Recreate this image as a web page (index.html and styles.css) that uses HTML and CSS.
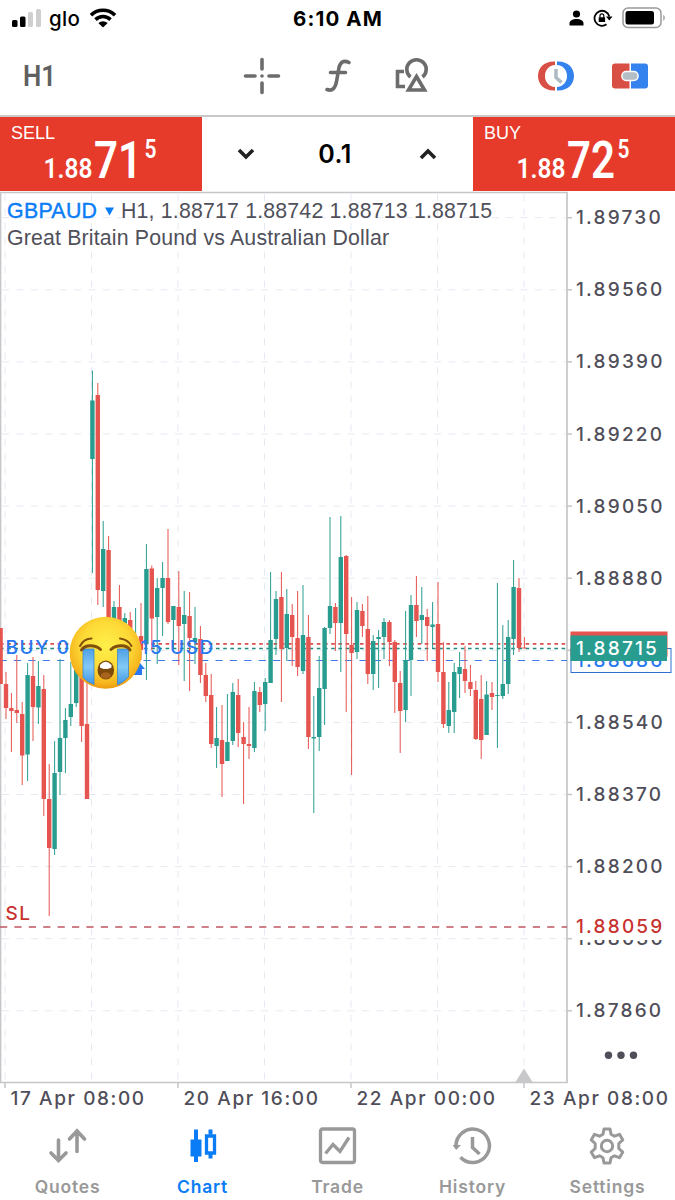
FILE: index.html
```html
<!DOCTYPE html>
<html lang="en">
<head>
    <meta charset="UTF-8">
    <title>GBPAUD H1</title>
    <meta name="viewport" content="width=device-width, initial-scale=1.0">
    <link rel="stylesheet" href="styles.css">
</head>
<body>
    <div class="status-bar">
        <div class="status-left">
            <svg class="signal" width="30" height="18" viewBox="0 0 30 18">
                <rect x="0" y="11" width="5.500" height="7" rx="1.5"/>
                <rect x="8" y="7.500" width="5.500" height="10.500" rx="1.500"/>
                <rect class="off" x="16" y="3" width="5" height="15" rx="1.5"/>
                <rect class="off" x="24" y="0" width="5" height="18" rx="1.5"/>
            </svg>
            <span class="carrier">glo</span>
            <svg class="wifi" width="28" height="20" viewBox="0 0 28 20">
                <path d="M2 7.200A17 17 0 0 1 26 7.200M6.500 11.600A10.700 10.700 0 0 1 21.500 11.600" fill="none" stroke="#000" stroke-width="3.600"/>
                <path d="M14 19.500L9.300 15Q14 11.400 18.700 15Z"/>
            </svg>
        </div>
        <div class="clock">6:10 AM</div>
        <div class="status-right">
            <svg width="15" height="16" viewBox="0 0 15 16"><circle cx="7.500" cy="4" r="3.600"/><path d="M.5 15.500V13.500C.5 10.500 3.500 9 7.500 9s7 1.500 7 4.500v2z"/></svg>
            <svg width="20" height="18" viewBox="0 0 20 18">
                <path d="M13.500 15.300A7.500 7.500 0 1 1 16.300 7.500" fill="none" stroke="#000" stroke-width="1.800"/>
                <path d="M13 7.500h6.500l-3.200 4zM5.700 8.300h6.400v4.700h-6.400z"/>
                <path d="M7 8.500V6.700a1.900 1.900 0 0 1 3.800 0v2" fill="none" stroke="#000" stroke-width="1.200"/>
            </svg>
            <svg width="44" height="22" viewBox="0 0 44 22">
                <rect x="1" y="1" width="38" height="19.500" rx="5" fill="none" stroke="#999" stroke-width="1.500"/>
                <rect x="3.500" y="4" width="28.500" height="13.500" rx="2.500"/>
                <path d="M41.300 7.500q3 3.200 0 6.500z" fill="#999"/>
            </svg>
        </div>
    </div>

    <div class="toolbar">
        <span class="timeframe">H1</span>
        <svg class="icon-cross" width="40" height="40" viewBox="0 0 40 40">
            <path d="M20 3.500V13M20 27V36.500M3.500 20H13M27 20H36.500M20 20h.01"/>
        </svg>
        <svg class="icon-func" width="40" height="40" viewBox="0 0 40 40">
            <path d="M31 6.500C25 3.500 21.800 7 20.800 12.500L18.600 25C17.500 32 14.500 35.500 9 33.500M12.500 16.500H27.500"/>
        </svg>
        <svg class="icon-shapes" width="40" height="40" viewBox="0 0 40 40">
            <path d="M12 15.500H5.500V30.500H13M18.500 21A9.700 9.700 0 1 1 30.500 21"/>
            <path d="M24.500 20.500L32.500 34H16.500Z"/>
        </svg>
        <svg class="icon-hours" width="38" height="32" viewBox="0 0 38 32">
            <path fill="#d84f45" d="M18 1.500C7 1 1 8 1 16S7 31 18 30.500V27C12 26.500 8 22 8 16s4-10.500 10-11z"/>
            <path fill="#3482ee" d="M20 1.500C31 1 37 8 37 16S31 31 20 30.500V27c6-.5 10-5 10-11S26 5.500 20 5z"/>
            <path d="M19 9v8.500l5.500 5" fill="none" stroke="#acbac2" stroke-width="3.500"/>
        </svg>
        <svg class="icon-panel" width="36" height="26" viewBox="0 0 36 26">
            <path fill="#d84f45" d="M3 .5H17.500V25.500H3Q0 25.500 0 22.500V3.500Q0 .5 3 .5z"/>
            <path fill="#3482ee" d="M19 .5H33Q36 .5 36 3.500V22.500Q36 25.500 33 25.500H19z"/>
            <rect x="10" y="8.500" width="16" height="9" rx="4" fill="#b3bec5" stroke="#fff" stroke-width="1.500"/>
        </svg>
    </div>

    <div class="trade-panel">
        <div class="side">
            <span class="side-label">SELL</span>
            <svg class="price" width="202" height="73" viewBox="0 0 202 73">
                <text class="price-small" x="43.500" y="61" textLength="49" lengthAdjust="spacingAndGlyphs">1.88</text>
                <text class="price-big" x="94" y="61" textLength="48" lengthAdjust="spacingAndGlyphs">71</text>
                <text class="price-sup" x="144.500" y="41" textLength="12" lengthAdjust="spacingAndGlyphs">5</text>
            </svg>
        </div>
        <div class="volume">
            <svg width="18" height="12" viewBox="0 0 18 12"><path d="M2 2l7 7 7-7"/></svg>
            <span>0.1</span>
            <svg width="18" height="12" viewBox="0 0 18 12"><path d="M2 10l7-7 7 7"/></svg>
        </div>
        <div class="side">
            <span class="side-label">BUY</span>
            <svg class="price" width="202" height="73" viewBox="0 0 202 73">
                <text class="price-small" x="43.500" y="61" textLength="49" lengthAdjust="spacingAndGlyphs">1.88</text>
                <text class="price-big" x="94" y="61" textLength="48" lengthAdjust="spacingAndGlyphs">72</text>
                <text class="price-sup" x="144.500" y="41" textLength="12" lengthAdjust="spacingAndGlyphs">5</text>
            </svg>
        </div>
    </div>

    <svg class="chart" width="675" height="923" viewBox="0 191 675 923">
        <defs>
            <radialGradient id="face" cx=".5" cy=".4" r=".62">
                <stop offset="0" stop-color="#fff04a"/>
                <stop offset=".55" stop-color="#fdd936"/>
                <stop offset=".85" stop-color="#f6b41d"/>
                <stop offset="1" stop-color="#e8920e"/>
            </radialGradient>
            <linearGradient id="tear" x1="0" y1="0" x2="0" y2="1">
                <stop offset="0" stop-color="#4f9fe6"/>
                <stop offset=".5" stop-color="#82caf5"/>
                <stop offset="1" stop-color="#3f96e8"/>
            </linearGradient>
        </defs>
        <g id="grid"></g>
        <path class="frame" d="M.5 1082.500V192.500H567V1082.500Z"/>
        <path d="M515.500 1082L524 1068.500L532.500 1082Z" fill="#c8c8cb"/>
        <path class="line-ask" d="M0 643.800H567"/>
        <path class="line-bid" d="M0 648.500H567"/>
        <path class="line-order" d="M-.5 660.500H567"/>
        <path class="line-sl" d="M0 927H567"/>
        <g id="candles"></g>

        <text class="symbol" x="7" y="217.500" textLength="90">GBPAUD</text>
        <path d="M105 207.500h9l-4.500 8z" fill="#0a7cf5"/>
        <text class="info" x="121" y="217.500" textLength="371">H1, 1.88717 1.88742 1.88713 1.88715</text>
        <text class="info" x="7" y="244.500" textLength="382">Great Britain Pound vs Australian Dollar</text>

        <text class="axis order" x="5.500" y="654">BUY 0</text>
        <text class="axis order" x="140.500" y="654">15 USD</text>
        <text class="axis sl" x="5.500" y="920">SL</text>
        <path d="M134 675v-8l6-4 5 6h-3v6z" fill="#2878f0"/>

        <g id="labels"></g>
        <rect x="574" y="916" width="95" height="24" fill="#fff"/>
        <text class="axis level sl" x="576" y="933">1.88059</text>
        <rect x="571" y="648.500" width="100" height="24" fill="#fff" stroke="#2f6fd0"/>
        <text class="axis level order" x="576" y="667">1.88686</text>
        <rect x="570.500" y="631.500" width="97" height="25" fill="#e5544f"/>
        <rect x="570.500" y="635.500" width="96.500" height="25.500" fill="#289d8f"/>
        <text class="axis level price-now" x="576" y="655">1.88715</text>
        <g fill="#4f4e59"><circle cx="608.500" cy="1055.300" r="3.700"/><circle cx="621" cy="1055.300" r="3.700"/><circle cx="633.500" cy="1055.300" r="3.700"/></g>

        <!-- crying face -->
        <g>
            <circle cx="105.700" cy="652.800" r="36" fill="url(#face)"/>
            <path d="M83 649h11v35.500q-6-2-11-7z" fill="url(#tear)" stroke="#2c7fd2" stroke-width=".7"/>
            <path d="M117.500 649h11v28q-5 5.500-11 7.800z" fill="url(#tear)" stroke="#2c7fd2" stroke-width=".7"/>
            <g fill="none" stroke="#81500c" stroke-linecap="round">
                <path d="M81.500 650C85 644.500 95 644.500 100.500 649.500M111 649.500C116.500 644.500 127 644.500 130 650" stroke-width="3"/>
                <path d="M80 646Q84 638.500 91.500 638.500M120 638.500Q128 639.500 131.500 646" stroke-width="2"/>
            </g>
            <ellipse cx="105.800" cy="670" rx="8.300" ry="9.500" fill="#7d4a0c"/>
            <path d="M100 667.500v-2.500q5.500-6.500 11.500 0v2.500q-6 3-11.500 0z" fill="#fff"/>
            <ellipse cx="105.800" cy="675.500" rx="5" ry="3.300" fill="#a8641d"/>
        </g>
    </svg>

    <div class="tab-bar">
        <div class="tab">
            <svg width="40" height="40" viewBox="1 0 40 40">
                <path d="M11.500 14V34M4 27l7.500 7.500L19 27M30 25.500V5.500M22.500 13L30 5l7.500 8" fill="none" stroke="currentColor" stroke-width="3.600" stroke-linecap="round"/>
            </svg>
            <span>Quotes</span>
        </div>
        <div class="tab active">
            <svg width="40" height="40" viewBox="1 0 40 40">
                <path d="M12 3.500h4v10h3.500v17h-3.500v5.500h-4v-5.500H8.500V13.500h3.500zM26.500 3.500h4v5h-4zM26.500 28h4v4.500h-4z" fill="currentColor"/>
                <path d="M24.500 10h8v17h-8z" fill="none" stroke="currentColor" stroke-width="3.300"/>
            </svg>
            <span>Chart</span>
        </div>
        <div class="tab">
            <svg width="40" height="40" viewBox="1 0 40 40">
                <rect x="3.500" y="3" width="34" height="33.500" rx="2" fill="none" stroke="currentColor" stroke-width="3.300"/>
                <path d="M8.500 27.500l7.500-9 7 7 9-14" fill="none" stroke="currentColor" stroke-width="3.300"/>
            </svg>
            <span>Trade</span>
        </div>
        <div class="tab">
            <svg width="40" height="40" viewBox="2 0 40 40">
                <path d="M5 20A16.700 16.700 0 1 1 9.500 31.200M21.500 11V21.500l7 6.500" fill="none" stroke="currentColor" stroke-width="3.500"/>
                <path d="M1.500 19h8.500l-4.800 5z" fill="currentColor"/>
            </svg>
            <span>History</span>
        </div>
        <div class="tab">
            <svg width="40" height="40" viewBox="1.500 .5 40 40">
                <path d="M17.500 3.500h6l1 5.200 3.500 2 5-1.900 3.300 5.600-4 3.600v5l4 3.600-3.300 5.600-5-1.900-3.500 2-1 5.200h-6l-1-5.200-3.500-2-5 1.900-3.300-5.600 4-3.600v-5l-4-3.600 3.300-5.600 5 1.900 3.500-2z" fill="none" stroke="currentColor" stroke-width="3" stroke-linejoin="round"/>
                <circle cx="20.500" cy="20.500" r="5.700" fill="none" stroke="currentColor" stroke-width="3"/>
            </svg>
            <span>Settings</span>
        </div>
    </div>
    <script src="chart.js"></script>
</body>
</html>
```
FILE: styles.css
```css
body {
    margin: 0;
    width: 675px;
    height: 1200px;
    overflow: hidden;
    background: #fff;
    font-family: Inter, "Liberation Sans", sans-serif;
}
svg {
    display: block;
    flex: none;
}
.status-bar {
    height: 36px;
    display: grid;
    grid-template-columns: 1fr auto 1fr;
    align-items: center;
    padding: 0 9px 0 12px;
    box-sizing: border-box;
}
.status-left, .status-right {
    display: flex;
    align-items: center;
}
.signal .off {
    fill: #cfcfcf;
}
.carrier {
    font-size: 20.5px;
    font-weight: 500;
    letter-spacing: 0.3px;
    margin: 0 9px 0 7px;
}
.clock {
    font-size: 20.5px;
    font-weight: 700;
    letter-spacing: 1.1px;
    margin-right: 2px;
}
.status-right {
    justify-content: flex-end;
    gap: 9px;
}
.toolbar {
    height: 79px;
    display: flex;
    align-items: center;
    padding-left: 23px;
}
.timeframe {
    width: 50px;
    font-family: Roboto, sans-serif;
    font-size: 30px;
    font-weight: 600;
    color: #606060;
    transform: scaleX(0.86);
    transform-origin: left;
}
.icon-cross, .icon-func, .icon-shapes {
    fill: none;
    stroke: #6c6c6c;
    stroke-width: 3.6;
}
.icon-cross {
    margin-left: 169px;
    stroke-linecap: round;
}
.icon-func {
    margin-left: 36px;
    stroke-linecap: round;
}
.icon-shapes {
    margin-left: 34px;
}
.icon-hours {
    margin-left: 105px;
}
.icon-panel {
    margin-left: 37px;
}
.trade-panel {
    height: 76px;
    box-sizing: border-box;
    border-top: 2px solid #c9c9c9;
    display: flex;
}
.side {
    width: 202px;
    height: 73.5px;
    background: #e63b2a;
    color: #fff;
    display: grid;
}
.side-label, .price {
    grid-area: 1 / 1;
}
.side-label {
    padding: 6px 0 0 11px;
    font-family: "Liberation Sans", sans-serif;
    font-size: 18px;
}
.price text {
    fill: #fff;
    font-family: Roboto, sans-serif;
    font-weight: 600;
}
.price .price-small {
    font-size: 28.5px;
}
.price .price-big {
    font-size: 51px;
}
.price .price-sup {
    font-size: 25px;
}
.volume {
    flex: 1;
    display: flex;
    align-items: center;
    justify-content: space-between;
    padding: 0 36px 0 35px;
    font-size: 25px;
    font-weight: 600;
}
.volume span {
    margin-right: 4px;
    letter-spacing: 0.5px;
}
.volume path {
    fill: none;
    stroke: #222;
    stroke-width: 3.6;
}
.frame {
    fill: none;
    stroke: #c6c6c9;
    stroke-width: 1.7;
}
.grid-line {
    stroke: #e5eaf2;
    stroke-width: 1;
    stroke-dasharray: 7.2 7.2;
}
.tick {
    stroke: #c6c6c9;
    stroke-width: 1.5;
}
.line-ask {
    stroke: #d9504d;
    stroke-width: 1.7;
    stroke-dasharray: 3.6 3.6;
}
.line-bid {
    stroke: #218a7c;
    stroke-width: 1.7;
    stroke-dasharray: 3.6 3.6;
}
.line-order {
    stroke: #3b7ce8;
    stroke-width: 1.2;
    stroke-dasharray: 7.2 7.2;
}
.line-sl {
    stroke: #c05661;
    stroke-width: 1.5;
    stroke-dasharray: 7.2 7.2;
}
.up {
    fill: #289d8f;
}
.down {
    fill: #e5544f;
}
.symbol, .info {
    font-family: "Liberation Sans", sans-serif;
    font-size: 21.3px;
    fill: #50505a;
}
.symbol {
    fill: #0a7cf5;
    stroke: #0a7cf5;
    stroke-width: 0.4;
}
.axis {
    font-size: 19px;
    font-weight: 550;
    letter-spacing: 1.6px;
    fill: #4f4e59;
}
.axis.level {
    letter-spacing: 2.2px;
}
.axis.order {
    fill: #2878f0;
}
.axis.sl {
    fill: #c8322f;
}
.axis.price-now {
    fill: #fff;
}
.tab-bar {
    height: 86px;
    display: flex;
}
.tab {
    width: 135px;
    padding-top: 12px;
    display: flex;
    flex-direction: column;
    align-items: center;
    color: #999;
    font-size: 17.5px;
    font-weight: 600;
    letter-spacing: 0.8px;
}
.tab span {
    margin-top: 10px;
}
.tab.active {
    color: #0a7cf5;
}
```
FILE: chart.js
```js
// direction, high, body top, body bottom, low (chart y units)
const candles = [
    ['d',628,628,684,684],['d',672,684,708,719],['d',693,708,711,752],['d',655,710,713,723],['d',702,714,755.5,785],
    ['u',663,675,754.5,781],['d',657,676,707,741],['u',661,686,707.5,724],['d',675,689,799,816],['d',764,799,848,916],
    ['u',741,773,849,855],['u',659,738,772,795],['u',708,720,738,773],['u',662,704,717,726],['u',660,665,703,707],
    ['d',650,660,726,742],['d',680,724,799,799],['u',370.5,400.5,459,573],['d',383,395,590,605],['u',521,549,591,607],
    ['d',536,550,625,640],['u',601,607,625,640],['d',585,607,625,640],['u',613,618,630,640],['d',612,620,640,650],
    ['u',608,640,650,660],['d',603,636,650,660],['u',544,569,644,680],['d',565.5,568.5,618.5,650],['u',578,588,617,664],
    ['u',562,578,588,636],['d',529,578,622,624],['u',606,606,620,648],['d',571,607,626,665],['u',591,615,624,681],
    ['d',592,616,638,691],['u',607,638,642,664],['d',626,639,675,683],['d',663,675,696,702],['d',674,695,744,748],
    ['u',707,738,746,768],['d',705,740,764,797],['u',694,742,761,761],['u',683,692,741,745],['d',679,695,733,747],
    ['d',722,737,744,804],['d',707,744,746,759],['u',682,691,748,752],['d',687,692,705,712],['u',678,682,704,731],
    ['u',572,640,683,683],['u',591,599,639,655],['d',572,597,649,702],['u',589,614,648,661],['d',604,615,637,666],
    ['d',591,638,667,676],['u',585,635,671,674],['d',615,637,737,749],['u',696,737,738.5,813],['u',656,688,737,751],
    ['u',627,628,689,725],['u',517,606,628,634],['d',603,607,623,651],['u',516,557,623,672],['d',555,556,634,712],
    ['d',597,645,653,775],['u',602,610,652,659],['d',604,611,626,637],['d',596,629,674,684],['u',635,641,674,690],
    ['u',630,637,639,688],['u',618,622,637,659],['d',620,622,642,666],['d',640,642,682,713],['d',671,683,711,753],
    ['u',611,660,710,722],['u',595,605,660,696],['d',576,605,621,637],['u',587,615,620,644],['d',609,617,626,661],
    ['u',602,624.5,627,648],['d',582,624,672,682],['d',642,672,724,728],['u',682,710,726,733],['u',663,672,712,733],
    ['u',652,667,674,698],['d',646,669,681,693],['d',665,682,689,696],['d',681,690,739,740],['d',675,699,740,759],
    ['u',681,694.5,735,735],['d',682,693,697,710],['u',583,695,696,748],['u',625,684,696,699],['u',620,637,684,694],
    ['u',560,587,639,655],['d',578,588,648,652],['d',637,647.5,648.5,648.5]
];

let bars = '';
candles.forEach(([dir, high, top, bottom, low], i) => {
    const x = 0.6 + i * 5.4;
    const cls = dir === 'u' ? 'up' : 'down';
    bars += `<rect class="${cls}" x="${x - 0.5}" y="${high}" width="1" height="${low - high}"/>`;
    bars += `<rect class="${cls}" x="${x - 2.2}" y="${top}" width="4.4" height="${bottom - top}"/>`;
});
document.getElementById('candles').innerHTML = bars;

let grid = '';
let labels = '';
for (let i = 0; i < 12; i++) {
    const y = 217.7 + i * 72.1;
    grid += `<path class="grid-line" d="M2 ${y}H566"/><path class="tick" d="M567 ${y}h5"/>`;
    // the 1.88710 level sits behind the current price
    if (i !== 6) {
        labels += `<text class="axis level" x="576" y="${y + 6.5}">${(1.8973 - i * 0.0017).toFixed(5)}</text>`;
    }
}
['17 Apr 08:00', null, '20 Apr 16:00', null, '22 Apr 00:00', null, '23 Apr 08:00'].forEach((time, i) => {
    const x = 5 + i * 86.5;
    grid += `<path class="grid-line" d="M${x} 194V1082"/>`;
    if (time) {
        grid += `<path class="tick" d="M${x} 1083v5"/>`;
        labels += `<text class="axis" x="${x + 5.5}" y="1104.5">${time}</text>`;
    }
});
document.getElementById('grid').innerHTML = grid;
document.getElementById('labels').innerHTML = labels;
```
